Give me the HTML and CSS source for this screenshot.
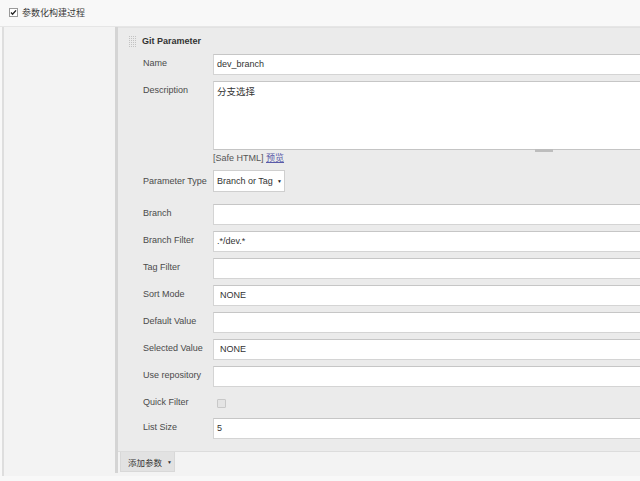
FILE: index.html
```html
<!DOCTYPE html>
<html>
<head>
<meta charset="utf-8">
<link rel="stylesheet" href="styles.css">
</head>
<body>
<div class="page">
  <div class="topbar">
    <svg class="topcb" width="9" height="9" viewBox="0 0 9 9"><rect x="0.5" y="0.5" width="8" height="8" fill="#fff" stroke="#9a9a9a"/><path d="M2 4.6 L3.6 6.3 L7 2.4" fill="none" stroke="#222" stroke-width="1.4"/></svg>
    <span class="toplabel">参数化构建过程</span>
  </div>
  <div class="outer">
    <div class="panel">
      <div class="panel-body">
        <div class="head"><span class="grip"></span><span class="title">Git Parameter</span></div>
        <div class="row r-name">
          <div class="label">Name</div>
          <div class="field"><div class="input">dev_branch</div></div>
        </div>
        <div class="row r-desc">
          <div class="label">Description</div>
          <div class="field">
            <div class="textwrap">
              <div class="textarea">分支选择</div>
              <span class="handle"></span>
            </div>
            <div class="safe">[Safe HTML] <span class="link">预览</span></div>
          </div>
        </div>
        <div class="row r-type">
          <div class="label">Parameter Type</div>
          <div class="field"><div class="select small">Branch or Tag <span class="arrow">▼</span></div></div>
        </div>
        <div class="row r-branch">
          <div class="label">Branch</div>
          <div class="field"><div class="input"></div></div>
        </div>
        <div class="row">
          <div class="label">Branch Filter</div>
          <div class="field"><div class="input">.*/dev.*</div></div>
        </div>
        <div class="row">
          <div class="label">Tag Filter</div>
          <div class="field"><div class="input"></div></div>
        </div>
        <div class="row">
          <div class="label">Sort Mode</div>
          <div class="field"><div class="input wide-sel">NONE</div></div>
        </div>
        <div class="row">
          <div class="label">Default Value</div>
          <div class="field"><div class="input"></div></div>
        </div>
        <div class="row">
          <div class="label">Selected Value</div>
          <div class="field"><div class="input wide-sel">NONE</div></div>
        </div>
        <div class="row">
          <div class="label">Use repository</div>
          <div class="field"><div class="input"></div></div>
        </div>
        <div class="row r-quick">
          <div class="label">Quick Filter</div>
          <div class="field"><span class="cb"></span></div>
        </div>
        <div class="row">
          <div class="label">List Size</div>
          <div class="field"><div class="input">5</div></div>
        </div>
      </div>
      <div class="panel-foot">
        <div class="addbtn">添加参数 <span class="arrow2">▼</span></div>
      </div>
    </div>
  </div>
</div>
</body>
</html>
```
FILE: styles.css
```css
html, body {
  margin: 0;
  padding: 0;
  background: #f8f8f8;
  overflow: hidden;
}
body {
  font-family: "Liberation Sans", Arial, "Noto Sans CJK SC", sans-serif;
  font-size: 9px;
  color: #333;
  width: 640px;
  height: 481px;
}
.page {
  width: 640px;
  overflow: hidden;
}
.topbar {
  border-bottom: 1px solid #e6e6e6;
  display: flex;
  align-items: center;
  padding-left: 9px;
  box-sizing: border-box;
  height: 27px;
}
.topcb {
  display: block;
  margin-right: 4px;
  margin-top: -2px;
}
.toplabel {
  font-size: 9px;
  color: #3a3a3a;
  margin-top: -1px;
}
.outer {
  margin-left: 2px;
  border-left: 2px solid #dedede;
  background: #f3f3f3;
  padding-left: 111px;
  height: 449px;
}
.panel {
  border-left: 3px solid #d4d4d4;
}
.panel-body {
  background: #ebebeb;
  border-bottom: 1px solid #dcdcdc;
  border-top: 1px solid #e2e2e2;
  padding-bottom: 12px;
  padding-left: 25px;
}
.head {
  height: 26px;
  display: flex;
  align-items: center;
}
.grip {
  width: 8px;
  height: 12px;
  margin-left: -15px;
  margin-right: 6px;
  background-image: linear-gradient(90deg, #ebebeb 1px, transparent 1px), linear-gradient(#ebebeb 1px, #c2c2c2 1px);
  background-size: 2px 2px;
}
.title {
  font-weight: bold;
  font-size: 9px;
  color: #333;
}
.row {
  display: flex;
  margin-top: 6px;
}
.r-name { margin-top: 0; }
.r-type { margin-top: 5px; }
.r-branch { margin-top: 12px; }
.label {
  width: 70px;
  flex: none;
  padding-top: 4px;
  line-height: 11px;
  color: #4a4a4a;
}
.r-type .label { padding-top: 6px; }
.field {
  flex: 1;
  min-width: 0;
}
.input {
  height: 21px;
  box-sizing: border-box;
  background: #fff;
  border: 1px solid #d4d4d4;
  border-top-color: #c6c6c6;
  border-right: none;
  padding-left: 3px;
  line-height: 19px;
  color: #333;
}
.wide-sel {
  padding-left: 6px;
}
.textwrap {
  position: relative;
}
.textarea {
  height: 69px;
  box-sizing: border-box;
  background: #fff;
  border: 1px solid #d4d4d4;
  border-top-color: #c6c6c6;
  border-bottom-color: #c4c4c4;
  border-right: none;
  padding: 3px 0 0 3px;
  font-size: 9.5px;
  line-height: 13px;
}
.handle {
  position: absolute;
  left: 322px;
  bottom: -2px;
  width: 18px;
  height: 3px;
  background: #bdbdbd;
}
.safe {
  height: 15px;
  line-height: 16px;
  color: #555;
}
.link {
  color: #5a5aa8;
  text-decoration: underline;
}
.select.small {
  display: inline-flex;
  align-items: center;
  height: 22px;
  width: 72px;
  box-sizing: border-box;
  background: #fff;
  border: 1px solid #cfcfcf;
  padding-left: 3px;
  color: #333;
}
.arrow {
  font-size: 5px;
  margin-left: 4px;
  color: #222;
}
.r-quick .field { height: 19px; display: flex; align-items: center; }
.cb {
  display: block;
  width: 7px;
  height: 7px;
  margin-left: 4px;
  margin-top: 1px;
  border: 1px solid #c8c8c8;
  border-radius: 1px;
  background: #e4e4e4;
}
.panel-foot {
  padding: 0 0 0 2px;
  height: 21px;
}
.addbtn {
  display: inline-flex;
  align-items: center;
  height: 20px;
  width: 55px;
  box-sizing: border-box;
  padding-left: 7px;
  background: #e2e2e2;
  border: 1px solid #d8d8d8;
  border-top: none;
  color: #333;
  font-size: 8.5px;
}
.arrow2 {
  font-size: 5px;
  margin-left: 5px;
}
```
